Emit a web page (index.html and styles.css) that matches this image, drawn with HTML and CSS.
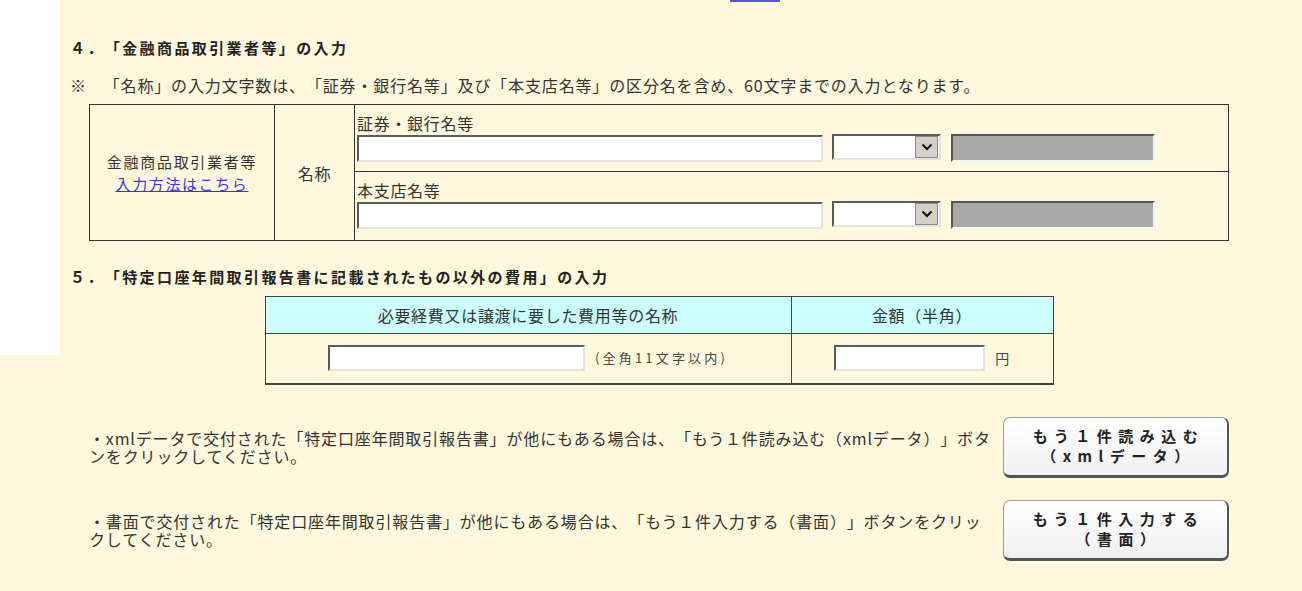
FILE: index.html
```html
<!DOCTYPE html>
<html lang="ja">
<head>
<meta charset="utf-8">
<title>特定口座年間取引報告書の入力</title>
<link rel="stylesheet" href="styles.css">
</head>
<body>
<div class="topbar"><span class="topbar-line"></span></div>
<main class="main">
  <h2 class="sec-title">４．「金融商品取引業者等」の入力</h2>
  <p class="note">※　「名称」の入力文字数は、「証券・銀行名等」及び「本支店名等」の区分名を含め、60文字までの入力となります。</p>
  <div class="box">
    <table class="firm">
      <colgroup><col class="firm-c1"><col class="firm-c2"><col></colgroup>
      <tr class="firm-r1">
        <td class="firm-head" rowspan="2"><span class="firm-head-l1">金融商品取引業者等</span><a class="link" href="#">入力方法はこちら</a></td>
        <td class="firm-name" rowspan="2">名称</td>
        <td class="firm-field">
          <div class="field-label">証券・銀行名等</div>
          <div class="field-row">
            <input class="tx tx-name" type="text">
            <span class="sel"><select class="sel-input"><option></option></select><span class="sel-btn"><svg width="12" height="8" viewBox="0 0 12 8"><path d="M1.5 1.5 L6 6 L10.5 1.5" fill="none" stroke="#111" stroke-width="2"/></svg></span></span>
            <input class="tx tx-off" type="text" disabled>
          </div>
        </td>
      </tr>
      <tr class="firm-r2">
        <td class="firm-field firm-field2">
          <div class="field-label">本支店名等</div>
          <div class="field-row">
            <input class="tx tx-name" type="text">
            <span class="sel"><select class="sel-input"><option></option></select><span class="sel-btn"><svg width="12" height="8" viewBox="0 0 12 8"><path d="M1.5 1.5 L6 6 L10.5 1.5" fill="none" stroke="#111" stroke-width="2"/></svg></span></span>
            <input class="tx tx-off" type="text" disabled>
          </div>
        </td>
      </tr>
    </table>
  </div>

  <h2 class="sec-title sec5">５．「特定口座年間取引報告書に記載されたもの以外の費用」の入力</h2>
  <div class="box">
    <table class="cost">
      <colgroup><col class="cost-c1"><col></colgroup>
      <tr>
        <th class="cost-h">必要経費又は譲渡に要した費用等の名称</th>
        <th class="cost-h">金額（半角）</th>
      </tr>
      <tr>
        <td class="cost-d"><div class="cost-cell"><input class="tx cost-name" type="text"><span class="hint">(全角11文字以内)</span></div></td>
        <td class="cost-d"><div class="cost-cell"><input class="tx cost-amt" type="text"><span class="yen">円</span></div></td>
      </tr>
    </table>

    <div class="more-row">
      <p class="more-text">・xmlデータで交付された「特定口座年間取引報告書」が他にもある場合は、「もう１件読み込む（xmlデータ）」ボタンをクリックしてください。</p>
      <button class="more-btn" type="button"><span class="btn-line">もう１件読み込む</span><span class="btn-line">（xmlデータ）</span></button>
    </div>
    <div class="more-row more-row2">
      <p class="more-text">・書面で交付された「特定口座年間取引報告書」が他にもある場合は、「もう１件入力する（書面）」ボタンをクリックしてください。</p>
      <button class="more-btn" type="button"><span class="btn-line">もう１件入力する</span><span class="btn-line">（書面）</span></button>
    </div>
  </div>
</main>
</body>
</html>
```

FILE: styles.css
```css
* { box-sizing: border-box; }
html, body { margin: 0; padding: 0; }
body {
  font-family: "Noto Sans CJK JP", "Noto Sans", sans-serif;
  font-size: 16px;
  color: #333;
  background: linear-gradient(#fff, #fff) 0 0 / 60px 355px no-repeat, #fff8dc;
  min-height: 591px;
  text-spacing-trim: space-all;
}

.topbar { height: 2px; }
.topbar-line { display: block; width: 50px; height: 2px; margin-left: 730px; background: #5555ff; }

.main { padding-left: 70px; }

.sec-title {
  margin: 36px 0 0;
  font-size: 15px;
  font-weight: bold;
  letter-spacing: 2.4px;
  line-height: 20px;
  color: #222;
}
.sec5 { margin-top: 26px; }

.note {
  margin: 17px 0 0;
  line-height: 20px;
  letter-spacing: 0.85px;
}

.box { width: 1140px; margin-left: 19px; margin-top: 9px; }

/* table 1 */
.firm {
  width: 1140px;
  border-collapse: collapse;
  border: 1px solid #333;
  letter-spacing: 0.7px;
}
.firm td { border: 1px solid #333; padding: 0; }
.firm-c1 { width: 185px; }
.firm-c2 { width: 80px; }
.firm-head { text-align: center; line-height: 22px; }
.firm-head-l1 { display: block; font-size: 15px; letter-spacing: 1.7px; }
.firm-name { text-align: center; }
.link { display: block; font-size: 15px; letter-spacing: 1.6px; color: #3333ff; text-decoration: underline; }
.firm-r1 { height: 67px; }
.firm-r2 { height: 69px; }
.firm-field { padding: 8px 0 0 2px !important; vertical-align: top; }
.field-label { line-height: 20px; height: 20px; }
.field-row { display: flex; align-items: flex-start; margin-top: 1px; }

.tx {
  height: 27px;
  border: 2px solid;
  border-color: #5a5a5a #e2e2e2 #e2e2e2 #5a5a5a;
  background: #fff;
  padding: 0 3px;
  font: inherit;
  outline: none;
}
.tx-name { width: 466px; margin-top: 1px; }
.sel {
  position: relative;
  display: inline-block;
  width: 109px;
  height: 26px;
  margin-left: 9px;
  border: 2px solid;
  border-color: #5a5a5a #e2e2e2 #e2e2e2 #5a5a5a;
  background: #fff;
}
.sel-input {
  appearance: none;
  -webkit-appearance: none;
  width: 100%;
  height: 100%;
  border: 0;
  background: transparent;
  font: inherit;
  outline: none;
}
.sel-btn {
  position: absolute;
  right: 1px;
  top: 0;
  width: 23px;
  height: 22px;
  background: #d4d0c8;
  border: 1px solid #8a8a8a;
  display: flex;
  align-items: center;
  justify-content: center;
}
.tx-off {
  width: 204px;
  height: 28px;
  margin-left: 10px;
  background: #a9a9a9;
  border-color: #555 #f4f4f4 #f4f4f4 #555;
}

/* table 2 */
.cost {
  width: 789px;
  margin: 9px auto 0;
  border-collapse: collapse;
  letter-spacing: 0.7px;
}
.cost-c1 { width: 526px; }
.cost-h {
  height: 37px;
  padding: 0;
  font-weight: normal;
  background: #ccffff;
  border: 1px solid #444;
  line-height: 20px;
}
.cost-d {
  height: 50px;
  padding: 0;
  border: 1px solid #444;
  border-top: 0;
  border-bottom-width: 2px;
}
.cost-cell { display: flex; align-items: center; justify-content: center; padding-bottom: 1px; }
.cost-name { width: 257px; height: 26px; }
.cost-amt { width: 151px; height: 26px; }
.hint { margin-left: 10px; font-size: 13px; letter-spacing: 3.2px; color: #444; }
.yen { margin-left: 10px; font-size: 14px; color: #444; }

/* more rows */
.more-row {
  display: flex;
  align-items: center;
  justify-content: space-between;
  margin-top: 32px;
}
.more-row2 { margin-top: 22px; }
.more-text {
  margin: 0;
  width: 908px;
  line-height: 18px;
  letter-spacing: 0.85px;
}
.more-btn {
  display: flex;
  flex-direction: column;
  align-items: center;
  justify-content: center;
  width: 226px;
  height: 61px;
  padding: 0 0 0 6px;
  border: 1px solid #9a9a9a;
  border-right: 2px solid #555;
  border-bottom: 3px solid #555;
  border-radius: 7px;
  background: linear-gradient(#ffffff, #f0f0f0);
  font-family: "Noto Sans CJK JP", "Noto Sans", sans-serif;
  font-size: 15px;
  font-weight: bold;
  letter-spacing: 6.5px;
  line-height: 20px;
  color: #222;
}
.btn-line { display: block; }
```
